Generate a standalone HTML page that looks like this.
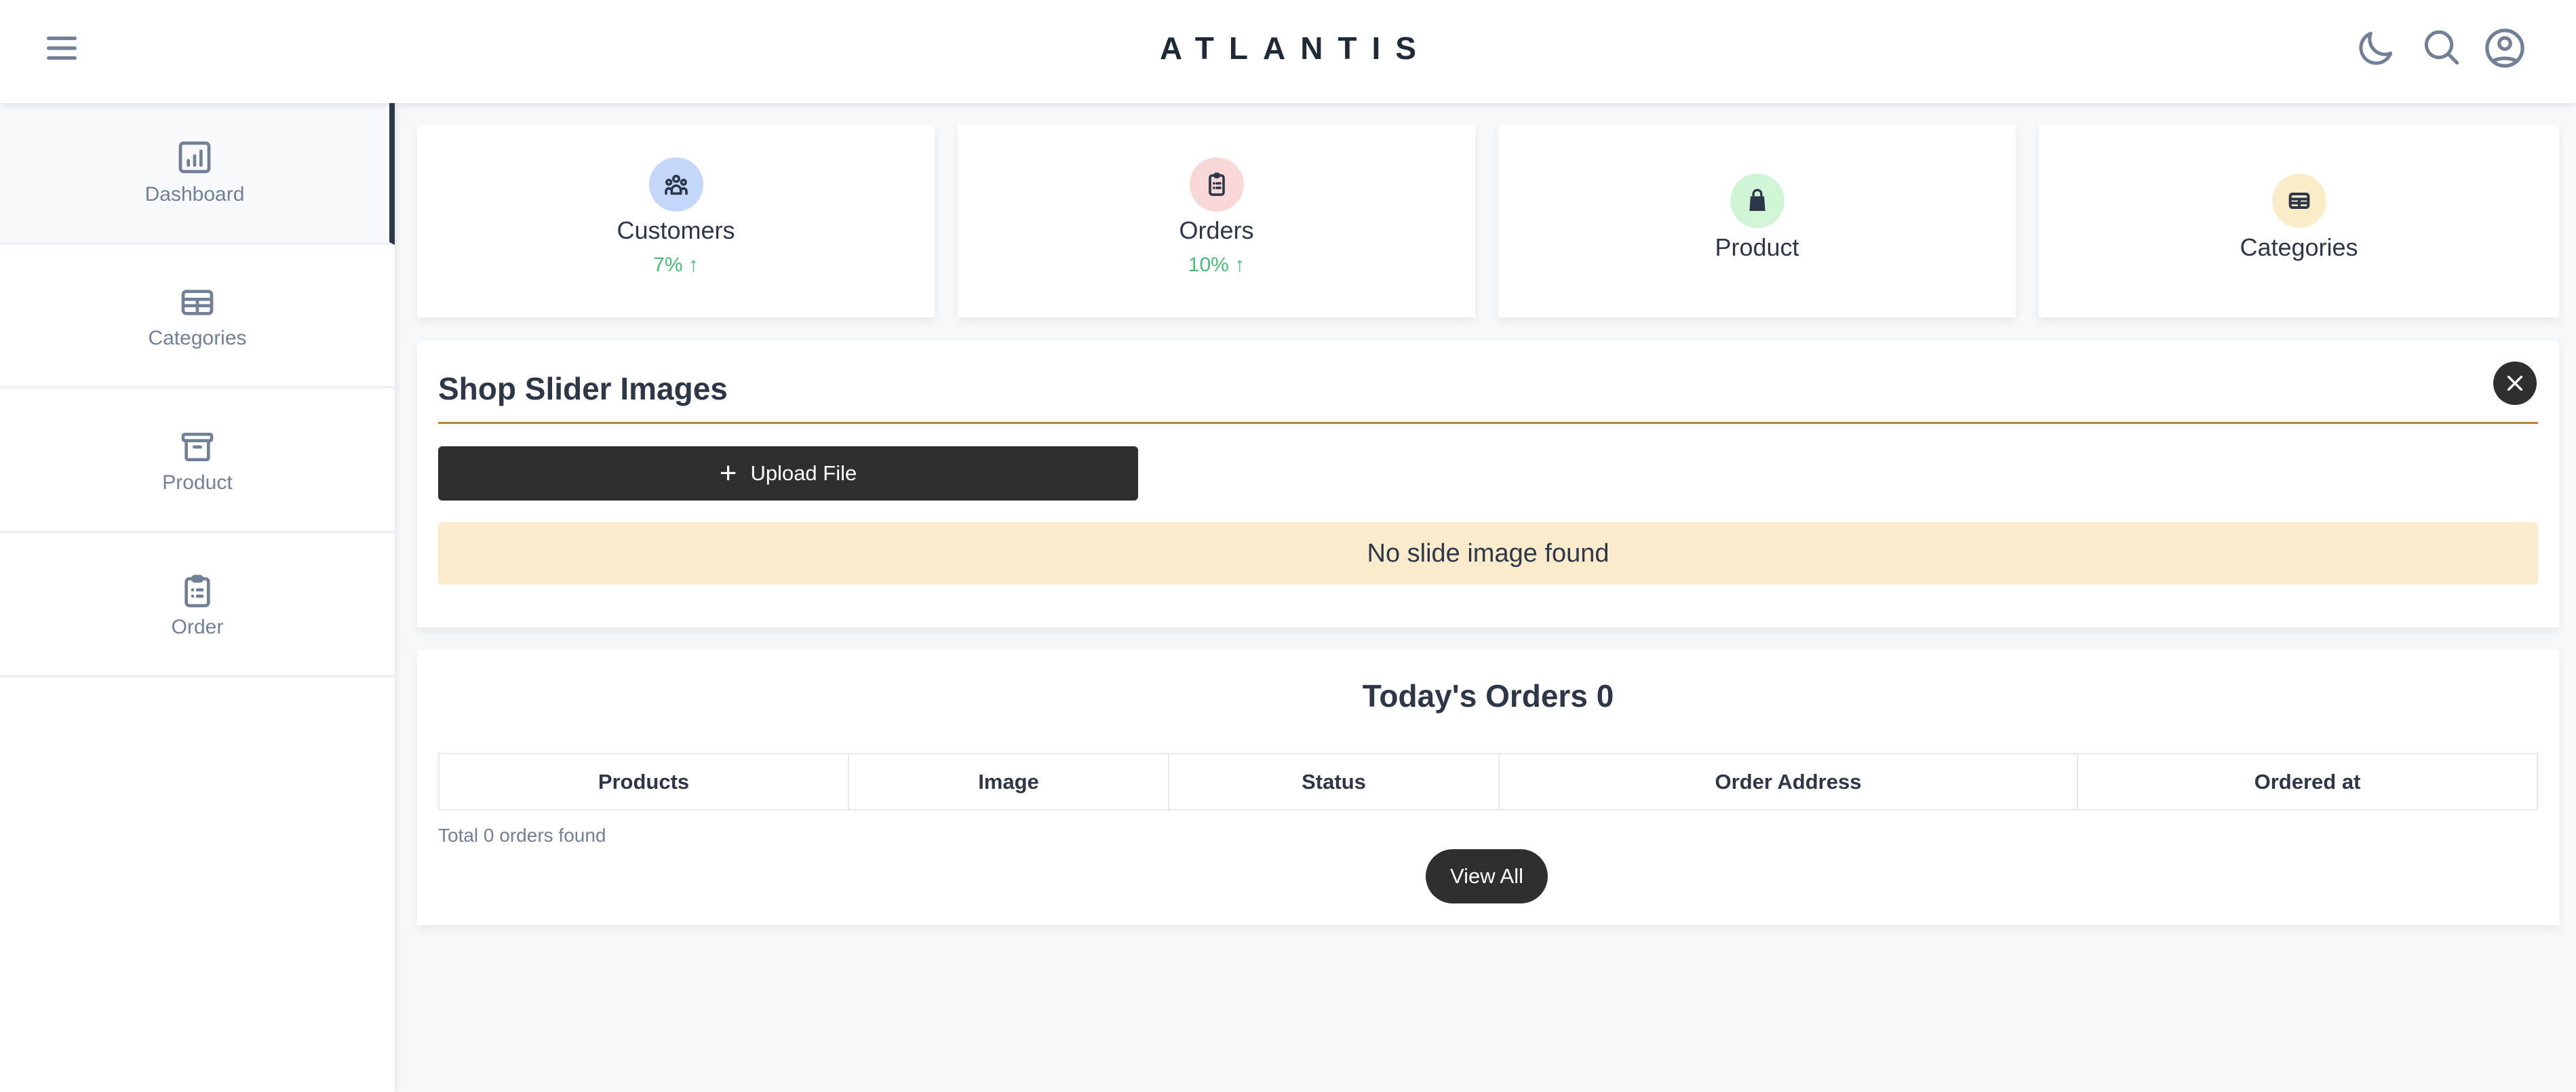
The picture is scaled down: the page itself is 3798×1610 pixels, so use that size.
<!DOCTYPE html>
<html><head><meta charset="utf-8"><style>
*{box-sizing:border-box;margin:0;padding:0}
body{width:3798px;height:1610px;overflow:hidden;background:#f7f8fa;font-family:"Liberation Sans",sans-serif;color:#2d3748;position:relative}
.hdr{position:absolute;left:0;top:0;width:3798px;height:152px;background:#fff;box-shadow:0 4px 10px rgba(0,0,0,.08);z-index:3}
.logo{position:absolute;left:0;width:3798px;top:44px;text-align:center;font-size:46px;font-weight:bold;letter-spacing:22px;color:#1f2a37;padding-left:22px}
.ic{position:absolute;stroke:#718096;fill:none;stroke-width:2;stroke-linecap:round;stroke-linejoin:round}
.side{position:absolute;left:0;top:152px;width:582px;height:1458px;background:#fff;box-shadow:3px 0 8px rgba(0,0,0,.08);z-index:2}
.it{position:absolute;left:0;width:582px;height:209px;border-bottom:4px solid #edf0f5;text-align:center;color:#718096;font-size:30px}
.it svg{position:absolute;left:50%;margin-left:-28px;width:56px;height:56px}
.it span{position:absolute;left:0;width:100%;top:118px}
.card{position:absolute;background:#fff;box-shadow:0 6px 14px rgba(0,0,0,.07)}
.circ{position:absolute;width:80px;height:80px;border-radius:50%;left:50%;margin-left:-40px}
.circ svg{position:absolute;left:20px;top:20px;width:40px;height:40px}
.ct{position:absolute;width:100%;text-align:center;font-size:36px;color:#2d3748}
.pc{position:absolute;width:100%;text-align:center;font-size:30px;color:#48bb78}
th{font-size:31px;font-weight:bold;border:2px solid #e5e9ef;height:83px;color:#2d3748}
</style></head><body>
<div class="hdr">
<svg class="ic" style="left:62px;top:42px;width:58px;height:58px;stroke-width:2.2" viewBox="0 0 24 24"><path d="M4 6h16M4 12h16M4 18h16"/></svg>
<div class="logo">ATLANTIS</div>
<svg class="ic" style="left:3470px;top:40px;width:64px;height:64px;stroke-width:1.9" viewBox="0 0 24 24"><path d="M20.5 14.5A8.5 8.5 0 0 1 9.5 3.5a8.5 8.5 0 1 0 11 11z"/></svg>
<svg class="ic" style="left:3568px;top:38px;width:64px;height:64px;stroke-width:1.9" viewBox="0 0 24 24"><circle cx="10.5" cy="10.5" r="7"/><path d="M15.5 15.5l5 5"/></svg>
<svg class="ic" style="left:3660px;top:38px;width:66px;height:66px;stroke-width:1.9" viewBox="0 0 24 24"><circle cx="12" cy="12" r="9.5"/><circle cx="12" cy="9.5" r="3"/><path d="M5.5 19a9 5 0 0 1 13 0"/></svg>
</div>
<div class="side">
<div class="it" style="top:0;background:#f7f9fb;border-right:8px solid #2d3748"><svg class="ic" style="top:52px;stroke-width:2" viewBox="0 0 24 24"><rect x="3" y="3" width="18" height="18" rx="2"/><path d="M8 17v-3M12 17v-6M16 17V8"/></svg><span>Dashboard</span></div>
<div class="it" style="top:212px"><svg class="ic" style="top:54px" viewBox="0 0 24 24"><rect x="3" y="5" width="18" height="14" rx="2"/><path d="M3 10h18M3 14h18M12 10v9"/></svg><span>Categories</span></div>
<div class="it" style="top:425px"><svg class="ic" style="top:54px" viewBox="0 0 24 24"><rect x="3" y="4" width="18" height="4" rx="1"/><path d="M5 8v11a1 1 0 0 0 1 1h12a1 1 0 0 0 1-1V8M10 12h4"/></svg><span>Product</span></div>
<div class="it" style="top:638px"><svg class="ic" style="top:54px" viewBox="0 0 24 24"><rect x="5" y="4" width="14" height="17" rx="2"/><rect x="9" y="2.5" width="6" height="3" rx="1.5"/><path d="M9 11h0M12 11h3M9 15h0M12 15h3"/></svg><span>Order</span></div>
</div>

<div class="card" style="left:615px;top:184px;width:763px;height:284px">
<div class="circ" style="top:48px;background:#c3d8f9"><svg class="ic" style="stroke:#2d3748;stroke-width:2.2" viewBox="0 0 24 24"><circle cx="12" cy="7" r="2.5"/><circle cx="5.5" cy="10" r="2"/><circle cx="18.5" cy="10" r="2"/><path d="M8 20v-3a4 4 0 0 1 8 0v3zM3 20v-2a2.5 2.5 0 0 1 4-2M21 20v-2a2.5 2.5 0 0 0-4-2"/></svg></div>
<div class="ct" style="top:135px">Customers</div><div class="pc" style="top:190px">7% ↑</div></div>
<div class="card" style="left:1412px;top:184px;width:763px;height:284px">
<div class="circ" style="top:48px;background:#f8d7d7"><svg class="ic" style="stroke:#2d3748;stroke-width:2.2" viewBox="0 0 24 24"><rect x="6" y="4" width="12" height="17" rx="2"/><rect x="10" y="2.5" width="4" height="3" rx="1.5"/><path d="M9.5 11h0M12 11h3M9.5 15h0M12 15h3"/></svg></div>
<div class="ct" style="top:135px">Orders</div><div class="pc" style="top:190px">10% ↑</div></div>
<div class="card" style="left:2209px;top:184px;width:763px;height:284px">
<div class="circ" style="top:72px;background:#d0f4d6"><svg style="position:absolute;left:20px;top:20px;width:40px;height:40px" viewBox="0 0 24 24"><path d="M8.5 8V6a3.5 3.5 0 0 1 7 0v2" fill="none" stroke="#2d3748" stroke-width="2"/><path d="M6 8h12l1 13H5z" fill="#2d3748"/></svg></div>
<div class="ct" style="top:160px">Product</div></div>
<div class="card" style="left:3006px;top:184px;width:767px;height:284px">
<div class="circ" style="top:72px;background:#fbecc9"><svg class="ic" style="stroke:#2d3748;stroke-width:2.4" viewBox="0 0 24 24"><rect x="4" y="6" width="16" height="12" rx="2"/><path d="M4 10.5h16M4 14h16M12 10.5V18"/></svg></div>
<div class="ct" style="top:160px">Categories</div></div>

<div class="card" style="left:615px;top:502px;width:3158px;height:423px">
<div style="position:absolute;left:31px;top:44px;font-size:46px;font-weight:bold;color:#2d3748">Shop Slider Images</div>
<div style="position:absolute;left:3061px;top:31px;width:64px;height:64px;border-radius:50%;background:#2f2f2f"><svg style="position:absolute;left:16px;top:16px;width:32px;height:32px" viewBox="0 0 24 24"><path d="M5 5l14 14M19 5L5 19" stroke="#fff" stroke-width="2.6" stroke-linecap="round"/></svg></div>
<div style="position:absolute;left:31px;top:120px;width:3096px;height:3px;background:#b7843a"></div>
<div style="position:absolute;left:31px;top:156px;width:1032px;height:80px;background:#2f2f2f;border-radius:6px;color:#fff;font-size:31px;text-align:center;line-height:80px"><span style="font-size:44px;vertical-align:-4px;margin-right:20px;font-weight:300">+</span>Upload File</div>
<div style="position:absolute;left:31px;top:268px;width:3096px;height:92px;background:#faebcc;border-radius:6px;text-align:center;line-height:92px;font-size:38px;color:#2d3748">No slide image found</div>
</div>

<div class="card" style="left:615px;top:958px;width:3158px;height:406px">
<div style="position:absolute;left:0;width:100%;top:41px;text-align:center;font-size:46px;font-weight:bold">Today's Orders 0</div>
<table style="position:absolute;left:31px;top:152px;width:3096px;border-collapse:collapse"><tr>
<th style="width:604px">Products</th><th style="width:472px">Image</th><th style="width:487px">Status</th><th style="width:853px">Order Address</th><th>Ordered at</th></tr></table>
<div style="position:absolute;left:31px;top:258px;font-size:28px;color:#718096">Total 0 orders found</div>
<div style="position:absolute;left:1487px;top:294px;width:180px;height:80px;border-radius:40px;background:#2f2f2f;color:#fff;font-size:31px;text-align:center;line-height:80px">View All</div>
</div>
</body></html>
